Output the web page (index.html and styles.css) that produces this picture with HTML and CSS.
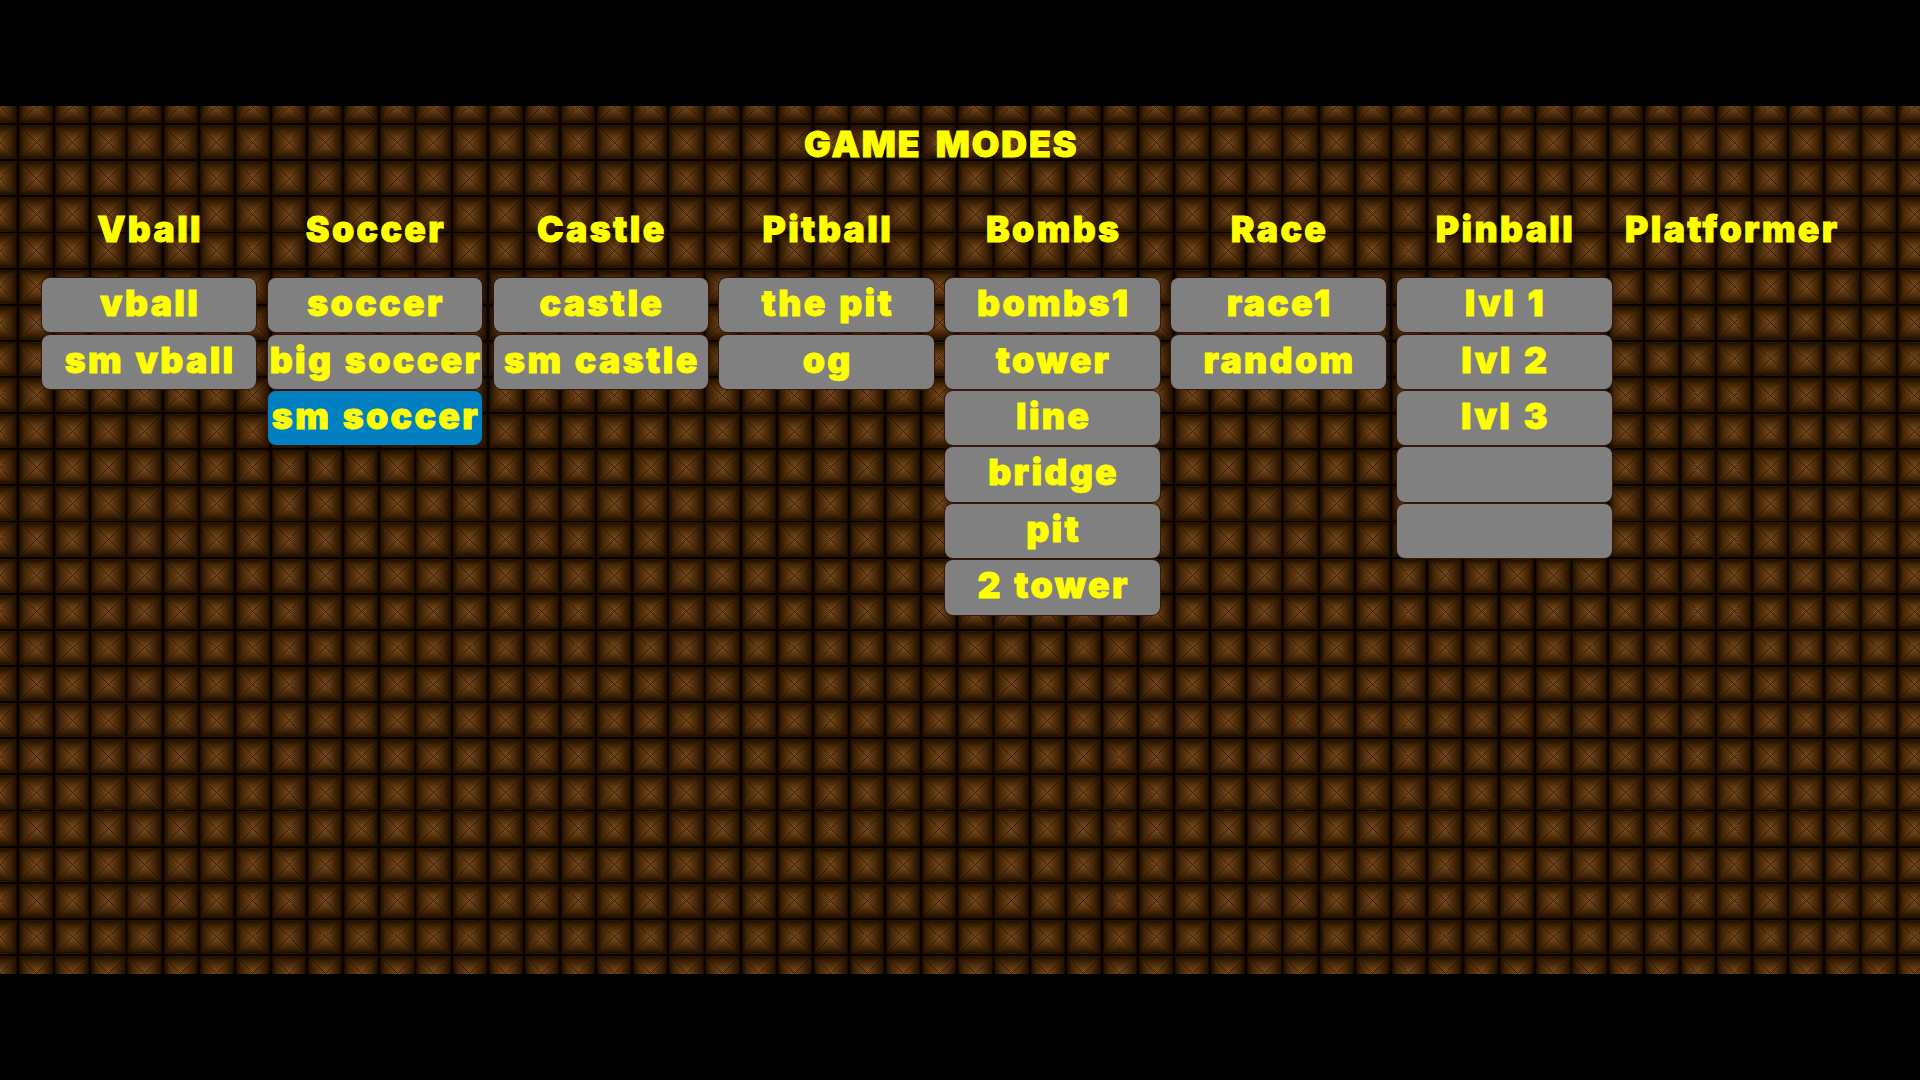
FILE: index.html
```html
<!DOCTYPE html>
<html lang="en">

<head>
    <meta charset="UTF-8">
    <meta name="viewport" content="width=device-width, initial-scale=1.0">
    <title>Game Modes</title>
    <link rel="stylesheet" href="styles.css">
</head>

<body>

    <main class="stage">
        <h1 class="title">GAME MODES</h1>

        <div class="modes">
            <section class="mode">
                <h2>Vball</h2>
                <button>vball</button>
                <button>sm vball</button>
            </section>

            <section class="mode">
                <h2>Soccer</h2>
                <button>soccer</button>
                <button>big soccer</button>
                <button class="selected">sm soccer</button>
            </section>

            <section class="mode">
                <h2>Castle</h2>
                <button>castle</button>
                <button>sm castle</button>
            </section>

            <section class="mode">
                <h2>Pitball</h2>
                <button>the pit</button>
                <button>og</button>
            </section>

            <section class="mode">
                <h2>Bombs</h2>
                <button>bombs1</button>
                <button>tower</button>
                <button>line</button>
                <button>bridge</button>
                <button>pit</button>
                <button>2 tower</button>
            </section>

            <section class="mode">
                <h2>Race</h2>
                <button>race1</button>
                <button>random</button>
            </section>

            <section class="mode">
                <h2>Pinball</h2>
                <button>lvl 1</button>
                <button>lvl 2</button>
                <button>lvl 3</button>
                <button></button>
                <button></button>
            </section>

            <section class="mode">
                <h2>Platformer</h2>
            </section>
        </div>
    </main>

</body>

</html>
```
FILE: styles.css
```css
body {
    margin: 0;
    min-height: 100vh;
    display: flex;
    align-items: center;
    background-color: #000;
    font-family: "Arial Black", Inter, sans-serif;
}

/* Game area, tiled with studs */
.stage {
    box-sizing: border-box;
    width: 100%;
    height: 867.4px;
    padding: 14px 0 0 41.8px;
    background-color: #0a0400;
    background-image: url("data:image/svg+xml,%3Csvg xmlns='http://www.w3.org/2000/svg' width='32' height='32' viewBox='0 0 32 32'%3E%3Cdefs%3E%3ClinearGradient id='v' x1='0' y1='0' x2='0' y2='32' gradientUnits='userSpaceOnUse'%3E%3Cstop offset='.03' stop-color='%231c0d00'/%3E%3Cstop offset='.18' stop-color='%233e2204'/%3E%3Cstop offset='.35' stop-color='%23603912'/%3E%3Cstop offset='.5' stop-color='%23804e22'/%3E%3Cstop offset='.65' stop-color='%23613a14'/%3E%3Cstop offset='.82' stop-color='%233f2205'/%3E%3Cstop offset='.97' stop-color='%231c0d00'/%3E%3C/linearGradient%3E%3ClinearGradient id='h' x1='0' y1='0' x2='32' y2='0' gradientUnits='userSpaceOnUse'%3E%3Cstop offset='.03' stop-color='%231c0d00'/%3E%3Cstop offset='.18' stop-color='%23422505'/%3E%3Cstop offset='.35' stop-color='%235d3711'/%3E%3Cstop offset='.5' stop-color='%237a4a20'/%3E%3Cstop offset='.65' stop-color='%23593410'/%3E%3Cstop offset='.82' stop-color='%233a1f04'/%3E%3Cstop offset='.97' stop-color='%231c0d00'/%3E%3C/linearGradient%3E%3C/defs%3E%3Cpath fill='%23080300' d='M0 0h32v32H0z'/%3E%3Cpath fill='url(%23h)' d='M1.1 1.1h29.8v29.8H1.1z'/%3E%3Cpath fill='url(%23v)' d='M1.1 1.1h29.8L16 16zM1.1 30.9h29.8L16 16z'/%3E%3Cpath stroke='%23180b00' stroke-opacity='.75' stroke-width='.8' d='M1 1l30 30M31 1L1 31'/%3E%3C/svg%3E");
    background-size: 36.14px 36.14px;
    background-position: -18px -18px;
}

.title,
.mode h2,
.mode button {
    margin: 0;
    color: #ff0;
    font-family: inherit;
    font-size: 35.6px;
    font-weight: 900;
    letter-spacing: 2.4px;
    word-spacing: 2px;
    white-space: nowrap;
    -webkit-text-stroke: 0.9px #ff0;
}

.title {
    width: 1799px;
    line-height: 50px;
    letter-spacing: 2px;
    word-spacing: 5px;
    text-align: center;
}

/* One column for each game mode */
.modes {
    display: grid;
    grid-template-columns: repeat(8, 214.6px);
    column-gap: 11.3px;
    margin-top: 35px;
}

.mode {
    display: flex;
    flex-direction: column;
    gap: 2.27px;
}

.mode h2 {
    margin-bottom: 20.5px;
    padding-left: 2px;
    line-height: 50px;
    text-align: center;
}

.mode button {
    display: flex;
    justify-content: center;
    height: 54.2px;
    padding: 0 0 0 2px;
    border: none;
    border-radius: 8px;
    background-color: #808080;
    box-shadow: 0 0 0 1px #35170d;
    line-height: 51px;
    cursor: pointer;
}

.mode button.selected {
    background-color: #0080c0;
}
```
